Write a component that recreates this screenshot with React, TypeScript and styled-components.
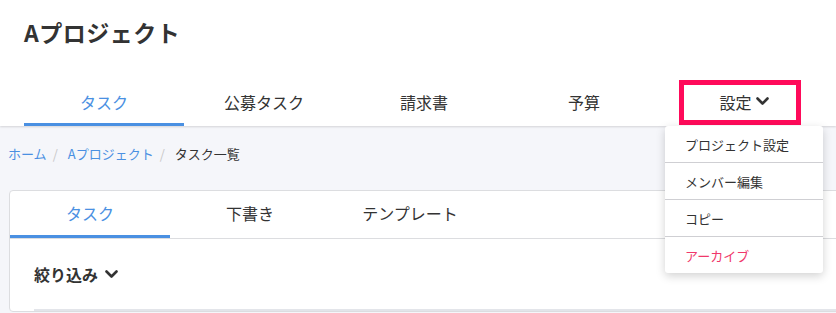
import React from 'react';
import styled, { createGlobalStyle } from 'styled-components';

const GlobalStyle = createGlobalStyle`
  html, body {
    margin: 0;
    padding: 0;
    background: #f5f6fa;
    overflow: hidden;
  }
  body {
    font-family: "Noto Sans CJK JP", "Noto Sans", sans-serif;
    color: #333;
  }
`;

const Header = styled.header`
  position: relative;
  z-index: 2;
  background: #fff;
  padding-left: 24px;
  box-shadow: 0 1px 2px rgba(0, 0, 0, 0.14);
`;

const Title = styled.h1`
  margin: 0;
  height: 80px;
  padding-top: 17px;
  box-sizing: border-box;
  font-size: 23px;
  line-height: 30px;
  letter-spacing: 0.5px;
  font-weight: 700;
  color: #333;
`;

const TabRow = styled.nav`
  display: flex;
`;

const Tab = styled.div<{ $active?: boolean; $width?: number; $height?: number }>`
  position: relative;
  width: ${({ $width }) => $width ?? 160}px;
  height: ${({ $height }) => $height ?? 46}px;
  box-sizing: border-box;
  display: flex;
  align-items: center;
  justify-content: center;
  gap: 4px;
  font-size: 16px;
  color: ${({ $active }) => ($active ? '#4a90e2' : '#333')};
  border-bottom: 3px solid ${({ $active }) => ($active ? '#4a90e2' : 'transparent')};
`;

const Highlight = styled.div`
  position: absolute;
  left: 15px;
  right: 23px;
  top: 0;
  bottom: -2px;
  border: 5px solid #ff0a5a;
  pointer-events: none;
`;

const Menu = styled.ul`
  position: absolute;
  top: calc(100% + 3px);
  left: 1px;
  right: 1px;
  margin: 0;
  padding: 0;
  list-style: none;
  background: #fff;
  border-radius: 3px;
  box-shadow: 0 3px 10px rgba(0, 0, 0, 0.18);
  z-index: 5;
`;

const MenuItem = styled.li<{ $danger?: boolean }>`
  height: 36px;
  padding-left: 20px;
  display: flex;
  align-items: center;
  font-size: 13px;
  color: ${({ $danger }) => ($danger ? '#f0386b' : '#333')};
  & + & {
    border-top: 1px solid #cfcfd3;
  }
`;

const Main = styled.main`
  padding-top: 20px;
`;

const Breadcrumb = styled.div`
  display: flex;
  align-items: center;
  height: 16px;
  padding-left: 8px;
  font-size: 13px;
  line-height: 16px;
`;

const Crumb = styled.span<{ $link?: boolean }>`
  color: ${({ $link }) => ($link ? '#4a90e2' : '#333')};
`;

const Sep = styled.span`
  color: #c8c8c8;
  margin: 0 10px 0 6px;
`;

const Card = styled.section`
  margin: 28px 0 0 9px;
  width: calc(100% + 20px);
  background: #fff;
  border: 1px solid #dcdde0;
  border-radius: 4px;
`;

const CardTabs = styled.div`
  display: flex;
  border-bottom: 1px solid #dcdde0;
`;

const Filter = styled.div`
  padding: 0 0 0 24px;
`;

const FilterHead = styled.div`
  display: flex;
  align-items: center;
  gap: 7px;
  height: 70px;
  font-size: 16px;
  font-weight: 700;
  color: #333;
`;

const Divider = styled.div`
  border-top: 2px solid #e3e5ea;
`;

const Chevron = () => (
  <svg width="13" height="9" viewBox="0 0 13 9" fill="none">
    <polyline points="1.5,1.5 6.5,6.5 11.5,1.5" stroke="#333" strokeWidth="2.6" strokeLinecap="round" strokeLinejoin="round" />
  </svg>
);

export default function App() {
  return (
    <>
      <GlobalStyle />
      <Header>
        <Title>Aプロジェクト</Title>
        <TabRow>
          <Tab $active>タスク</Tab>
          <Tab>公募タスク</Tab>
          <Tab>請求書</Tab>
          <Tab>予算</Tab>
          <Tab>
            設定
            <Chevron />
            <Highlight />
            <Menu>
              <MenuItem>プロジェクト設定</MenuItem>
              <MenuItem>メンバー編集</MenuItem>
              <MenuItem>コピー</MenuItem>
              <MenuItem $danger>アーカイブ</MenuItem>
            </Menu>
          </Tab>
        </TabRow>
      </Header>
      <Main>
        <Breadcrumb>
          <Crumb $link>ホーム</Crumb>
          <Sep>/</Sep>
          <Crumb $link>Aプロジェクト</Crumb>
          <Sep>/</Sep>
          <Crumb>タスク一覧</Crumb>
        </Breadcrumb>
        <Card>
          <CardTabs>
            <Tab $active $height={47}>タスク</Tab>
            <Tab $height={47}>下書き</Tab>
            <Tab $height={47}>テンプレート</Tab>
          </CardTabs>
          <Filter>
            <FilterHead>
              絞り込み
              <Chevron />
            </FilterHead>
            <Divider />
          </Filter>
        </Card>
      </Main>
    </>
  );
}
